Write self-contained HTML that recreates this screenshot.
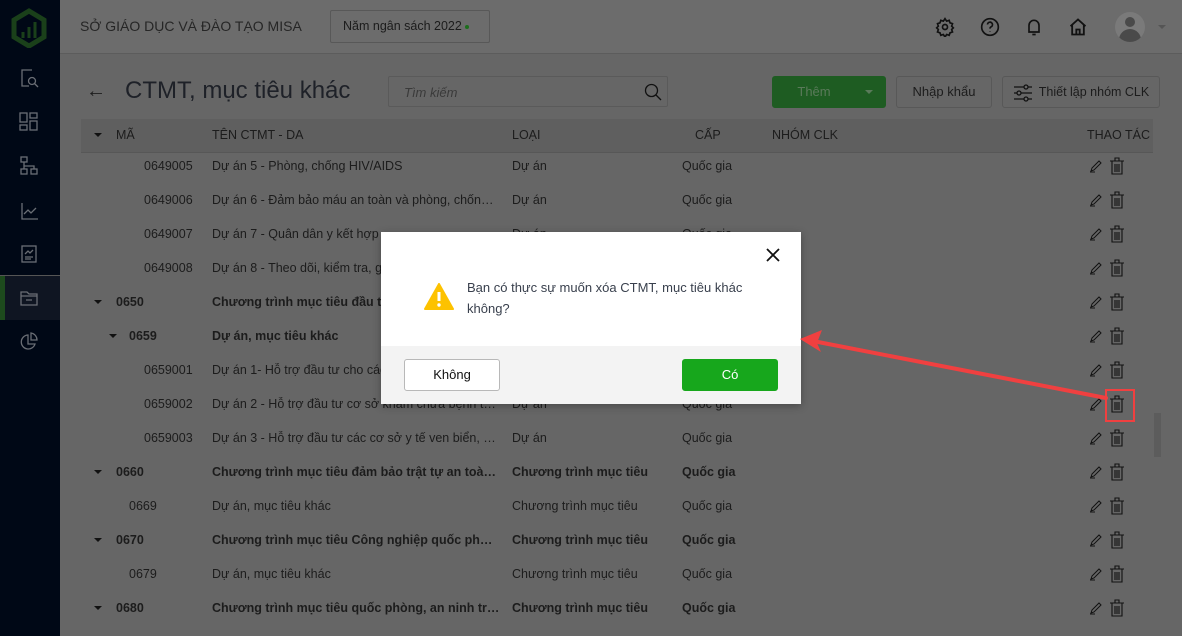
<!DOCTYPE html>
<html><head><meta charset="utf-8"><style>
*{box-sizing:border-box;margin:0;padding:0}
body{width:1182px;height:636px;overflow:hidden;background:#666;font-family:"Liberation Sans",sans-serif;position:relative;color:#1c1c1c}
.sb{position:absolute;left:0;top:0;width:60px;height:636px;background:#000816}
.sb svg{position:absolute;left:19px}
.hdr{position:absolute;left:60px;top:0;right:0;height:54px;background:#6c6c6c;border-bottom:1px solid #5c5c5c}
.a{position:absolute;white-space:nowrap}
.t{font-size:12.5px}
.b{font-weight:bold}
.n{overflow:hidden;text-overflow:ellipsis;width:288px}
.btn{position:absolute;border:1px solid #585858;border-radius:3px;font-size:13px;text-align:center;line-height:30px}
</style></head><body>
<div class="sb">
<svg style="left:10px;top:8px" width="38" height="40" viewBox="0 0 38 40"><path d="M19 3 L34 12 L34 29 L19 38 L4 29 L4 12 Z" fill="none" stroke="#1a401a" stroke-width="5"/><path d="M13 30 V24 M19 30 V19 M25 30 V14" stroke="#1a401a" stroke-width="3"/></svg>
<svg style="top:68px" width="20" height="20" viewBox="0 0 20 20" fill="none" stroke="#6a6e75" stroke-width="1.3"><path d="M13 2H3v16h7"/><circle cx="13" cy="13" r="3.5"/><path d="M15.5 15.5L19 19"/></svg>
<svg style="top:112px" width="20" height="20" viewBox="0 0 20 20" fill="none" stroke="#6a6e75" stroke-width="1.3"><rect x="1" y="1" width="7" height="9"/><rect x="11" y="1" width="7" height="5"/><rect x="1" y="13" width="7" height="5"/><rect x="11" y="9" width="7" height="9"/></svg>
<svg style="top:156px" width="20" height="20" viewBox="0 0 20 20" fill="none" stroke="#6a6e75" stroke-width="1.3"><rect x="2" y="1" width="6" height="5"/><rect x="2" y="13" width="6" height="5"/><rect x="12" y="13" width="6" height="5"/><path d="M5 6v7M5 10h10v3"/></svg>
<svg style="top:201px" width="20" height="20" viewBox="0 0 20 20" fill="none" stroke="#6a6e75" stroke-width="1.3"><path d="M3 2v16h16M5 13l4-4 3 3 5-5"/></svg>
<svg style="top:244px" width="20" height="20" viewBox="0 0 20 20" fill="none" stroke="#6a6e75" stroke-width="1.3"><rect x="3" y="2" width="14" height="16"/><path d="M6 10l3-3 2 2 3-3M6 13h8M6 15h6"/></svg>
<div style="position:absolute;left:0;top:275px;width:60px;height:45px;background:#0f1522;border-top:1px solid #555"></div>
<div style="position:absolute;left:0;top:276px;width:5px;height:44px;background:#1d4a1d"></div>
<svg style="top:288px" width="20" height="20" viewBox="0 0 20 20" fill="none" stroke="#6a6e75" stroke-width="1.3"><path d="M2 4h6l2 2h8v11H2z M2 8h16M7 12h6"/></svg>
<svg style="top:332px" width="20" height="20" viewBox="0 0 20 20" fill="none" stroke="#6a6e75" stroke-width="1.3"><path d="M9 3a7 7 0 1 0 7 9H9z"/><path d="M12 1a7 7 0 0 1 6 7h-6z"/></svg>
</div>
<div class="hdr">
<div class="a" style="left:20px;top:18px;font-size:14px;color:#262626">SỞ GIÁO DỤC VÀ ĐÀO TẠO MISA</div>
<div class="a" style="left:270px;top:10px;width:160px;height:33px;border:1px solid #585858;border-radius:2px;font-size:12.5px;line-height:31px;padding-left:12px">Năm ngân sách 2022 <span style="display:inline-block;width:4px;height:4px;border-radius:2px;background:#1c6e1c;vertical-align:middle"></span></div>
<svg class="a" style="left:875px;top:17px" width="20" height="20" viewBox="0 0 24 24" fill="none" stroke="#111" stroke-width="2"><circle cx="12" cy="12" r="3"/><path d="M12 2l2 3 3-1 1 3 3 1-1 3 2 2-2 2 1 3-3 1-1 3-3-1-2 3-2-3-3 1-1-3-3-1 1-3-2-2 2-2-1-3 3-1 1-3 3 1z"/></svg>
<svg class="a" style="left:920px;top:17px" width="20" height="20" viewBox="0 0 24 24" fill="none" stroke="#111" stroke-width="2"><circle cx="12" cy="12" r="10"/><path d="M9 9a3 3 0 1 1 4 3c-1 .5-1 1-1 2M12 17v.5"/></svg>
<svg class="a" style="left:964px;top:17px" width="20" height="20" viewBox="0 0 24 24" fill="none" stroke="#111" stroke-width="2"><path d="M6 18V10a6 6 0 0 1 12 0v8H5h14M10 21h4"/></svg>
<svg class="a" style="left:1008px;top:17px" width="20" height="20" viewBox="0 0 24 24" fill="none" stroke="#111" stroke-width="2.2"><path d="M3 11L12 3l9 8M5 9v12h14V9M10 21v-6h4v6"/></svg>
<div class="a" style="left:1055px;top:12px;width:30px;height:30px;border-radius:15px;background:#7a7a7a;overflow:hidden"><div style="position:absolute;left:10px;top:5px;width:10px;height:10px;border-radius:5px;background:#4a4a4a"></div><div style="position:absolute;left:4px;top:17px;width:22px;height:16px;border-radius:11px 11px 0 0;background:#4a4a4a"></div></div>
<div class="a" style="left:1098px;top:25px;border:4px solid transparent;border-top-color:#555"></div>
</div>
<div class="a" style="left:86px;top:80px;font-size:20px">←</div>
<div class="a" style="left:125px;top:77px;font-size:24px;color:#1e2128">CTMT, mục tiêu khác</div>
<div class="a" style="left:388px;top:76px;width:280px;height:31px;border:1px solid #5a5a5a;border-radius:2px"><span class="a" style="left:15px;top:8px;font-size:13px;font-style:italic;color:#3a3a3a">Tìm kiếm</span><svg class="a" style="left:255px;top:6px" width="18" height="18" viewBox="0 0 18 18" fill="none" stroke="#111" stroke-width="1.3"><circle cx="7.5" cy="7.5" r="6"/><path d="M12 12l5 5"/></svg></div>
<div class="btn" style="left:772px;top:76px;width:114px;height:32px;background:#1e5c22;border-color:#1e5c22;color:#5a7a5a;padding-right:30px">Thêm<span class="a" style="right:12px;top:13px;border:4px solid transparent;border-top-color:#5a7a5a"></span></div>
<div class="btn" style="left:896px;top:76px;width:96px;height:32px">Nhập khẩu</div>
<div class="btn" style="left:1002px;top:76px;width:158px;height:32px;padding-left:26px;font-size:12.5px">Thiết lập nhóm CLK<svg class="a" style="left:10px;top:7px" width="20" height="18" viewBox="0 0 20 18" fill="none" stroke="#111" stroke-width="1.3"><path d="M1 3h18M1 9h18M1 15h18"/><circle cx="13" cy="3" r="2" fill="#666"/><circle cx="6" cy="9" r="2" fill="#666"/><circle cx="13" cy="15" r="2" fill="#666"/></svg></div>
<div class="a" style="left:81px;top:119px;width:1072px;height:34px;background:#5f5f5f;border-bottom:1px solid #575757"></div>
<div class="a" style="left:94px;top:133px;border:4px solid transparent;border-top-color:#111"></div>
<div class="a t" style="left:116px;top:128px">MÃ</div>
<div class="a t" style="left:212px;top:128px">TÊN CTMT - DA</div>
<div class="a t" style="left:512px;top:128px">LOẠI</div>
<div class="a t" style="left:695px;top:128px">CẤP</div>
<div class="a t" style="left:772px;top:128px">NHÓM CLK</div>
<div class="a t" style="left:1087px;top:128px">THAO TÁC</div>
<div class="a" style="left:1154px;top:413px;width:7px;height:44px;background:#5c5c5c"></div>
<div id="rows"></div>
<script>
var R=[[0,'0649005','Dự án 5 - Phòng, chống HIV/AIDS','Dự án','Quốc gia'],
[0,'0649006','Dự án 6 - Đảm bảo máu an toàn và phòng, chống HIV','Dự án','Quốc gia'],
[0,'0649007','Dự án 7 - Quân dân y kết hợp','Dự án','Quốc gia'],
[0,'0649008','Dự án 8 - Theo dõi, kiểm tra, giám sát','Dự án','Quốc gia'],
[1,'0650','Chương trình mục tiêu đầu tư','Chương trình mục tiêu','Quốc gia'],
[2,'0659','Dự án, mục tiêu khác','',''],
[0,'0659001','Dự án 1- Hỗ trợ đầu tư cho các','Dự án','Quốc gia'],
[0,'0659002','Dự án 2 - Hỗ trợ đầu tư cơ sở khám chữa bệnh tuyến','Dự án','Quốc gia'],
[0,'0659003','Dự án 3 - Hỗ trợ đầu tư các cơ sở y tế ven biển, hải đảo','Dự án','Quốc gia'],
[1,'0660','Chương trình mục tiêu đảm bảo trật tự an toàn giao thông','Chương trình mục tiêu','Quốc gia'],
[3,'0669','Dự án, mục tiêu khác','Chương trình mục tiêu','Quốc gia'],
[1,'0670','Chương trình mục tiêu Công nghiệp quốc phòng thực hiện','Chương trình mục tiêu','Quốc gia'],
[3,'0679','Dự án, mục tiêu khác','Chương trình mục tiêu','Quốc gia'],
[1,'0680','Chương trình mục tiêu quốc phòng, an ninh trên địa bàn','Chương trình mục tiêu','Quốc gia']];
var h='';
R.forEach(function(r,i){var y=166+34*i,b=(r[0]==1||r[0]==2)?' b':'';
var cx=r[0]==0?144:(r[0]==1?116:129);
if(r[0]==1)h+='<div class="a" style="left:94px;top:'+(y-2)+'px;border:4px solid transparent;border-top-color:#111"></div>';
if(r[0]==2)h+='<div class="a" style="left:109px;top:'+(y-2)+'px;border:4px solid transparent;border-top-color:#111"></div>';
h+='<div class="a t'+b+'" style="left:'+cx+'px;top:'+(y-7)+'px">'+r[1]+'</div>';
h+='<div class="a t n'+b+'" style="left:212px;top:'+(y-7)+'px">'+r[2]+'</div>';
h+='<div class="a t'+(r[0]==1?' b':'')+'" style="left:512px;top:'+(y-7)+'px">'+r[3]+'</div>';
h+='<div class="a t'+(r[0]==1?' b':'')+'" style="left:682px;top:'+(y-7)+'px">'+r[4]+'</div>';
h+='<svg class="a" style="left:1089px;top:'+(y-7)+'px" width="14" height="14" viewBox="0 0 14 14" fill="none" stroke="#111" stroke-width="1"><path d="M2 12l1-3 7-7 2 2-7 7zM1 13h5"/></svg>';
h+='<svg class="a" style="left:1109px;top:'+(y-9)+'px" width="16" height="18" viewBox="0 0 16 18" fill="none" stroke="#111" stroke-width="1.1"><path d="M1 4h14M6 4V1h4v3M3 4v13h10V4M6 7v8M8 7v8M10 7v8"/></svg>';
});
document.getElementById('rows').innerHTML=h;
</script>
<div class="a" style="left:381px;top:232px;width:420px;height:172px;background:#fff;box-shadow:0 2px 8px rgba(0,0,0,.3)">
<svg class="a" style="left:385px;top:16px" width="14" height="14" viewBox="0 0 14 14" stroke="#111" stroke-width="1.8"><path d="M1 1l12 12M13 1L1 13"/></svg>
<svg class="a" style="left:43px;top:51px" width="30" height="27" viewBox="0 0 30 27"><path d="M15 1L29 26H1z" fill="#fdc200" stroke="#fdc200" stroke-linejoin="round" stroke-width="2"/><path d="M15 9v9" stroke="#fff" stroke-width="3"/><circle cx="15" cy="22" r="1.7" fill="#fff"/></svg>
<div class="a" style="left:86px;top:45px;font-size:13px;line-height:21px;color:#39404d">Bạn có thực sự muốn xóa CTMT, mục tiêu khác<br>không?</div>
<div class="a" style="left:0;top:114px;width:420px;height:58px;background:#f3f3f3"></div>
<div class="btn" style="left:23px;top:127px;width:96px;height:32px;background:#fff;border-color:#b8b8b8;color:#111">Không</div>
<div class="btn" style="left:301px;top:127px;width:96px;height:32px;background:#17a71c;border-color:#17a71c;color:#fff">Có</div>
</div>
<div class="a" style="left:1105px;top:389px;width:30px;height:33px;border:2px solid #f04040"></div>
<svg class="a" style="left:0;top:0" width="1182" height="636"><line x1="1106" y1="398" x2="818" y2="342" stroke="#f04040" stroke-width="4" stroke-linecap="round"/><path d="M800 339 L822 330 L817 343 L821 352 Z" fill="#f04040"/></svg>
</body></html>
